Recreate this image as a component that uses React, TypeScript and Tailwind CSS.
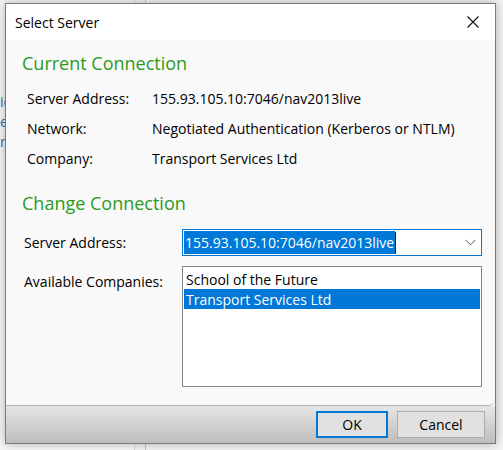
import React from 'react';

const font = { fontFamily: '"Open Sans", "Noto Sans", Arial, sans-serif' };

function Chevron() {
  return (
    <svg width="11" height="7" viewBox="0 0 11 7" fill="none">
      <path d="M0.5 0.8 L5.5 5.8 L10.5 0.8" stroke="#505050" strokeWidth="1" />
    </svg>
  );
}

function CloseIcon() {
  return (
    <svg width="12" height="12" viewBox="0 0 12 12" fill="none">
      <path d="M0.5 0.5 L11.5 11.5 M11.5 0.5 L0.5 11.5" stroke="#111" strokeWidth="1.1" />
    </svg>
  );
}

export default function App() {
  const current = [
    ['Server Address:', '155.93.105.10:7046/nav2013live'],
    ['Network:', 'Negotiated Authentication (Kerberos or NTLM)'],
    ['Company:', 'Transport Services Ltd'],
  ];

  return (
    <div className="relative w-[503px] h-[450px] overflow-hidden bg-[#f3f3f3] text-black" style={font}>
      {/* window behind the dialog */}
      <div className="absolute left-0 top-0 w-[135px] h-full bg-[#f7f7f7] border-r border-[#dadada]" />
      <div className="absolute left-[145px] top-0 w-px h-full bg-[#c4c4c4]" />
      <div className="absolute left-0 top-[94px] flex flex-col gap-[4px] text-[14px] leading-[16px] text-[#2a6ebb]">
        <span>ic</span>
        <span>e</span>
        <span>ra</span>
      </div>

      {/* dialog */}
      <div className="absolute left-[5px] top-[3px] w-[491px] h-[441px] flex flex-col border border-[#7a7a7a] bg-white shadow-[0_0_10px_rgba(0,0,0,0.28)]">
        <div className="h-[36px] shrink-0 flex items-center justify-between pl-[9px] pr-[16px] bg-white">
          <span className="text-[14px]">Select Server</span>
          <CloseIcon />
        </div>

        <div className="flex-1 flex flex-col bg-[#f9f9f9] rounded-br-[6px] border-b border-[#b4b4b4] pl-[16px] pt-[10px]">
          <div className="h-[26px] flex items-center text-[18px] text-[#2b9a1f]">Current Connection</div>

          <div className="mt-[7px] flex flex-col pl-[5px]">
            {current.map(([k, v]) => (
              <div key={k} className="h-[30px] flex items-center text-[14px]">
                <span className="w-[125px]">{k}</span>
                <span>{v}</span>
              </div>
            ))}
          </div>

          <div className="mt-[17px] h-[26px] flex items-center text-[18px] text-[#2b9a1f]">Change Connection</div>

          <div className="mt-[13px] flex items-center pl-[2px]">
            <span className="w-[158px] text-[14px]">Server Address:</span>
            <div className="w-[300px] h-[27px] border border-[#0078d7] bg-white flex items-center pl-px pr-[5px]">
              <span className="h-[23px] flex items-center bg-[#0078d7] text-white text-[14px] pl-px pr-[1px]">155.93.105.10:7046/nav2013live</span>
              <span className="w-px h-[22px] bg-[#222]" />
              <span className="flex-1" />
              <Chevron />
            </div>
          </div>

          <div className="mt-[10px] flex items-start pl-[2px]">
            <span className="w-[158px] text-[14px] pt-[5px]">Available Companies:</span>
            <div className="w-[300px] h-[121px] border border-[#828790] bg-white p-px pt-[2px] flex flex-col">
              <div className="h-[20px] flex items-center pl-[2px] text-[14px]">School of the Future</div>
              <div className="h-[20px] flex items-center pl-[2px] text-[14px] bg-[#0078d7] text-white">Transport Services Ltd</div>
            </div>
          </div>
        </div>

        <div className="h-[37px] shrink-0 flex items-center justify-end gap-[9px] pr-[10px] bg-gradient-to-b from-[#e6e6e6] to-[#bdbdbd]">
          <button className="w-[72px] h-[27px] border-2 border-[#0078d7] bg-[#e1e1e1] text-[14px]">OK</button>
          <button className="w-[88px] h-[27px] border border-[#adadad] bg-[#e1e1e1] text-[14px]">Cancel</button>
        </div>
      </div>
    </div>
  );
}
